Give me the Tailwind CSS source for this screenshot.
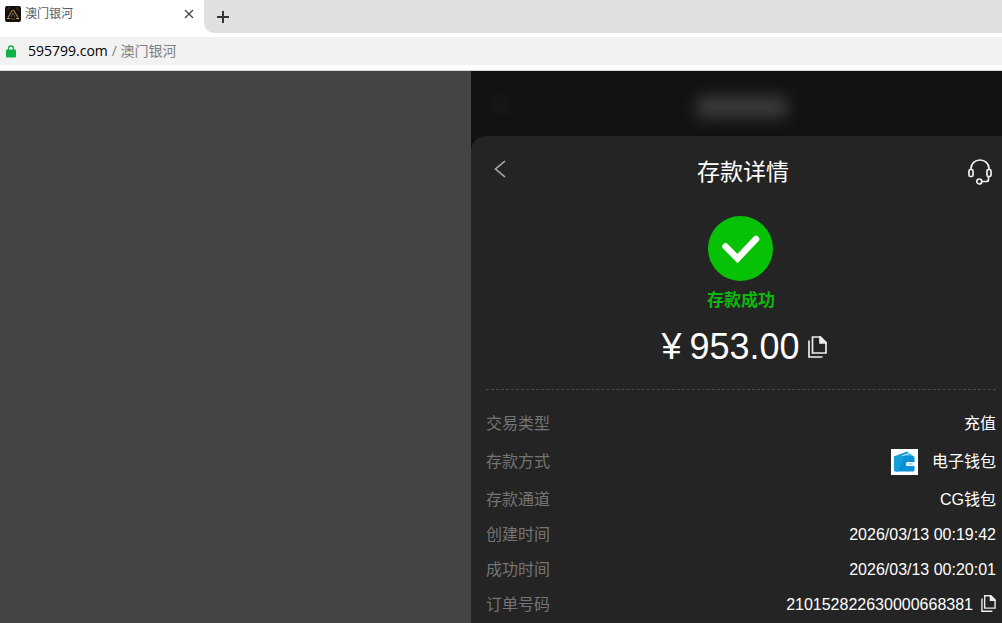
<!DOCTYPE html>
<html lang="zh-CN">
<head>
    <meta charset="UTF-8">
    <meta name="viewport" content="width=device-width, initial-scale=1.0">
    <title>澳门银河</title>
    <script src="https://cdn.jsdelivr.net/npm/@tailwindcss/browser@4"></script>
</head>
<body class="h-screen flex flex-col overflow-hidden bg-[#444444] font-['Liberation_Sans','Noto_Sans_CJK_SC',sans-serif]">

    <!-- Browser bar -->
    <header class="shrink-0 bg-white border-b border-[#d5dad8] font-['Open_Sans','Noto_Sans_CJK_SC',sans-serif]">
        <div class="flex h-[33px] bg-white">
            <div class="flex items-center w-[204px] h-7 pl-[5px] pr-2.5 bg-white">
                <svg class="w-4 h-4 mr-1 shrink-0" viewBox="0 0 16 16">
                    <rect width="16" height="16" rx="2" fill="#15100b"/>
                    <path d="M3 2h2M11 2h2M2 4h2M12 4h2" stroke="#5a3c20"/>
                    <path d="M7.500 4L3 11.500M8.500 4l4.500 7.500" stroke="#a87c3c" stroke-width="1.200" fill="none"/>
                    <path d="M8 7l-2 4M8 7l2 4" stroke="#39606a" fill="none"/>
                    <path d="M2 12.500h3M11 12.500h3" stroke="#c99a50"/>
                    <path d="M6 13h4" stroke="#81502a"/>
                </svg>
                <span class="text-xs text-[#555b66]">澳门银河</span>
                <button type="button" aria-label="关闭标签页" class="ml-auto">
                    <svg class="w-[10px] h-[10px]" viewBox="0 0 10 10" fill="none" stroke="#4a4a4a" stroke-width="1.400"><path d="M1 1l8 8M9 1l-8 8"/></svg>
                </button>
            </div>
            <div class="flex flex-1 items-center pl-3 bg-[#e0e0e0] rounded-bl-[10px]">
                <button type="button" aria-label="新标签页">
                    <svg class="w-[14px] h-[14px]" viewBox="0 0 14 14" fill="none" stroke="#333" stroke-width="2"><path d="M7 1v12M1 7h12"/></svg>
                </button>
            </div>
        </div>
        <div class="pt-1 pb-[5px]">
            <div class="flex items-center h-7 pl-1.5 bg-[#f2f2f2] text-sm">
                <svg class="w-[10px] h-[13px] mr-3" viewBox="0 0 10 13">
                    <path d="M2.500 6V3.500a2.500 2.500 0 0 1 5 0V6" fill="none" stroke="#10b04c" stroke-width="1.300"/>
                    <rect y="4.500" width="10" height="8" rx="1" fill="#10b04c"/>
                </svg>
                <span class="text-black">595799.com</span>
                <span class="ml-1 text-[#808080]">/ 澳门银河</span>
            </div>
        </div>
    </header>

    <main class="flex flex-1 min-h-0">
        <div class="w-[47%] shrink-0"></div>

        <div class="flex flex-1 flex-col bg-[#121212]">
            <!-- Page title behind the sheet -->
            <div class="relative flex items-center justify-center h-[65px] shrink-0 pt-1.5 pl-3 overflow-hidden" aria-hidden="true">
                <span class="absolute left-5 top-6 w-5 h-5 bg-[#161616] blur-xs"></span>
                <span class="w-[90px] h-5 bg-[#3f3f3f] rounded blur-sm"></span>
            </div>

            <section class="flex-1 pl-[15px] pr-1.5 bg-[#242424] rounded-tl-[15px]">
                <div class="flex items-center justify-between h-[72px] pl-2 pr-1">
                    <button type="button" aria-label="返回" class="pb-1.5">
                        <svg class="w-3 h-[18px]" viewBox="0 0 12 18" fill="none" stroke="#b0b0b0" stroke-width="1.600"><path d="M11 1L1.500 9l9.500 8"/></svg>
                    </button>
                    <h1 class="pl-3 text-[23px] leading-8 text-white">存款详情</h1>
                    <button type="button" aria-label="客服">
                        <svg class="w-6 h-[26px]" viewBox="0 0 24 26" fill="none" stroke="#f2f2f2" stroke-width="1.700">
                            <path d="M3 11V9.500a9 8.500 0 0 1 18 0V11"/>
                            <rect x="1" y="10.500" width="4" height="7" rx="1.500"/>
                            <rect x="19" y="10.500" width="4" height="7" rx="1.500"/>
                            <path d="M20.500 17.500v3a2 2 0 0 1-2 2h-4.500"/>
                            <circle cx="11.300" cy="22.500" r="2.500"/>
                        </svg>
                    </button>
                </div>

                <div class="flex flex-col items-center pt-2 pb-4 border-b border-dashed border-[#484848]">
                    <svg class="w-[65px] h-[65px]" viewBox="0 0 65 65">
                        <circle cx="32.500" cy="32.500" r="32.500" fill="#06c106"/>
                        <path d="M17.500 30.500L29.500 42.500L48 23" fill="none" stroke="#fff" stroke-width="6.500" stroke-linecap="round"/>
                    </svg>
                    <p class="mt-2 text-[17px] leading-6 font-bold text-[#0bb80b]">存款成功</p>
                    <div class="flex items-center h-[52px] mt-2 pl-1.5 text-4xl text-white">
                        <span>¥</span>
                        <span class="ml-2">953.00</span>
                        <button type="button" aria-label="复制金额" class="ml-2">
                            <svg class="w-[19px] h-[22px]" viewBox="0 0 19 22" fill="none" stroke="#ececec" stroke-width="1.700">
                                <path d="M4.500 1h8L18 6.500V17H4.500z"/>
                                <path d="M12 1v6h6z" fill="#ececec"/>
                                <path d="M1 4.500V21h13.500"/>
                            </svg>
                        </button>
                    </div>
                </div>

                <dl class="flex flex-col gap-[11px] pt-[22px] text-base leading-6 text-white">
                    <div class="flex items-center justify-between">
                        <dt class="text-[#757575]">交易类型</dt>
                        <dd>充值</dd>
                    </div>
                    <div class="flex items-center justify-between h-[30px]">
                        <dt class="text-[#757575]">存款方式</dt>
                        <dd class="flex items-center gap-3.5">
                            <svg class="w-[27px] h-[26px]" viewBox="0 0 27 26">
                                <rect width="27" height="26" fill="#fff"/>
                                <path d="M4 7L16 2.500l2 1.500L8 8z" fill="#1d9bd8"/>
                                <path d="M12 7l7-2.500L22 7z" fill="#31b3dd"/>
                                <path d="M3 7h19a1.500 1.500 0 0 1 1.500 1.500V21a1.500 1.500 0 0 1-1.500 1.500H5A2 2 0 0 1 3 20.500z" fill="#0b8fd9"/>
                                <path d="M3 7h10L7 22.500H5A2 2 0 0 1 3 20.500z" fill="#159fd9"/>
                                <rect x="15" y="13" width="9" height="4" rx="1.500" fill="#fff"/>
                                <rect x="17" y="14" width="5" height="2" rx="1" fill="#a5d8f2"/>
                            </svg>
                            <span>电子钱包</span>
                        </dd>
                    </div>
                    <div class="flex items-center justify-between">
                        <dt class="text-[#757575]">存款通道</dt>
                        <dd>CG钱包</dd>
                    </div>
                    <div class="flex items-center justify-between">
                        <dt class="text-[#757575]">创建时间</dt>
                        <dd>2026/03/13 00:19:42</dd>
                    </div>
                    <div class="flex items-center justify-between">
                        <dt class="text-[#757575]">成功时间</dt>
                        <dd>2026/03/13 00:20:01</dd>
                    </div>
                    <div class="flex items-center justify-between">
                        <dt class="text-[#757575]">订单号码</dt>
                        <dd class="flex items-center gap-2">
                            <span>210152822630000668381</span>
                            <button type="button" aria-label="复制订单号" class="pb-1">
                                <svg class="w-[15px] h-[17px]" viewBox="0 0 19 22" fill="none" stroke="#ececec" stroke-width="1.800">
                                    <path d="M4.500 1h8L18 6.500V17H4.500z"/>
                                    <path d="M12 1v6h6z" fill="#ececec"/>
                                    <path d="M1 4.500V21h13.500"/>
                                </svg>
                            </button>
                        </dd>
                    </div>
                </dl>
            </section>
        </div>
    </main>
</body>
</html>
